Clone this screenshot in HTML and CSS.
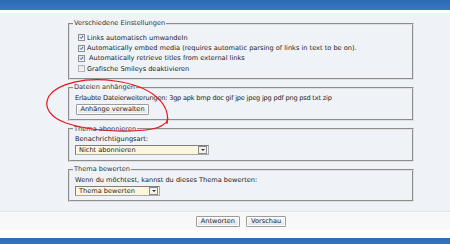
FILE: index.html
```html
<!DOCTYPE html>
<html>
<head>
  <meta charset="utf-8">
  <title>Antworten</title>
  <link rel="stylesheet" href="styles.css">
</head>
<body>
  <div class="topbar"></div>

  <div class="panel">
    <div class="column">
      <fieldset class="box box-options">
        <legend>Verschiedene Einstellungen</legend>
        <label class="check"><span class="cb"><svg viewBox="0 0 7 7"><path d="M1.6 3.4 L3 5 L5.6 1.4"/></svg></span>Links automatisch umwandeln</label>
        <label class="check"><span class="cb"><svg viewBox="0 0 7 7"><path d="M1.6 3.4 L3 5 L5.6 1.4"/></svg></span>Automatically embed media (requires automatic parsing of links in text to be on).</label>
        <label class="check"><span class="cb"><svg viewBox="0 0 7 7"><path d="M1.6 3.4 L3 5 L5.6 1.4"/></svg></span>&nbsp;Automatically retrieve titles from external links</label>
        <label class="check"><span class="cb off"></span>Grafische Smileys deaktivieren</label>
      </fieldset>

      <fieldset class="box">
        <legend>Dateien anhängen</legend>
        <div class="line line-tight">Erlaubte Dateierweiterungen: 3gp apk bmp doc gif jpe jpeg jpg pdf png psd txt zip</div>
        <button class="btn btn-attach" type="button">Anhänge verwalten</button>
      </fieldset>

      <fieldset class="box">
        <legend>Thema abonnieren</legend>
        <div class="line">Benachrichtigungsart:</div>
        <div class="select select-wide"><span class="select-text">Nicht abonnieren</span><span class="select-arrow"></span></div>
      </fieldset>

      <fieldset class="box">
        <legend>Thema bewerten</legend>
        <div class="line">Wenn du möchtest, kannst du dieses Thema bewerten:</div>
        <div class="select select-short"><span class="select-text">Thema bewerten</span><span class="select-arrow"></span></div>
      </fieldset>
    </div>
  </div>

  <div class="footer">
    <div class="column buttons">
      <button class="btn" type="button">Antworten</button>
      <button class="btn" type="button">Vorschau</button>
    </div>
  </div>

  <div class="bottombar"></div>

  <!-- red marker circle drawn over the attachments box -->
  <svg class="scribble" width="450" height="244" viewBox="0 0 450 244">
    <path d="M167 124 C171 104 152 86 115 81 C86 77 58 83 49 96 C42 108 52 118 66 123 C88 131 128 133 152 129 C162 127 167 124 168 118"/>
  </svg>
</body>
</html>
```

FILE: styles.css
```css
body {
  margin: 0;
  background: #ffffff;
  font-family: "DejaVu Sans", sans-serif;
  font-size: 6.6px;
  color: #222222;
  position: relative;
  height: 244px;
  overflow: hidden;
}

.topbar {
  height: 10px;
  background: linear-gradient(#2c69b2, #3877c2);
}

.panel {
  margin-top: 3px;
  background: #eff3f7;
  padding: 6px 0 9px 0;
}

.column {
  margin-left: 68px;
  width: 346px;
}

.box {
  margin: 0 0 3.5px 0;
  padding: 0 4px 4.5px 4px;
  border: 2px groove #e0e0e0;
}
.box:last-child {
  margin-bottom: 0;
}

.box legend {
  padding: 0 1px;
  margin-left: -1px;
  line-height: 9px;
  color: #333333;
}

.box-options {
  padding-top: 4.5px;
  padding-bottom: 3.5px;
}

.check {
  display: flex;
  align-items: center;
  height: 10.4px;
  padding-left: 4px;
  gap: 2px;
}

.cb {
  width: 5px;
  height: 5px;
  border: 1px solid #8e8f8f;
  background: linear-gradient(#dedede, #fbfbfb);
  display: flex;
}
.cb svg {
  width: 5px;
  height: 5px;
  fill: none;
  stroke: #2446a8;
  stroke-width: 1.3;
}
.cb.off {
  border-color: #b4b4b4;
  background: linear-gradient(#e8e8e8, #f6f6f6);
}

.line {
  line-height: 10px;
  padding-top: 0.5px;
  padding-left: 1px;
}
.line-tight {
  letter-spacing: -0.2px;
}

.btn {
  font-family: inherit;
  font-size: 6.6px;
  color: #222222;
  height: 11px;
  line-height: 9px;
  padding: 0 4px;
  border: 1px solid #9c9c9c;
  border-radius: 1px;
  background: linear-gradient(#fbfbfb, #e3e3e3);
  box-shadow: inset 0 0 0 1px #ffffff;
}

.btn-attach {
  display: block;
  margin: 1px 0 0 2px;
  width: 73px;
  padding: 0;
}

.select {
  margin: 1px 0 0 1px;
  height: 10px;
  box-sizing: border-box;
  border: 1px solid #a9a9a9;
  border-top-color: #7f7f7f;
  border-left-color: #7f7f7f;
  background: #fdf6df;
  display: flex;
  align-items: center;
  justify-content: space-between;
}
.select-wide {
  width: 134px;
}
.select-short {
  width: 85px;
}
.select-text {
  padding-left: 3px;
  line-height: 8px;
}
.select-arrow {
  width: 7px;
  height: 6px;
  margin-right: 1px;
  border: 1px solid #8a8a8a;
  background: #f1f1f1;
  position: relative;
}
.select-arrow::after {
  content: "";
  position: absolute;
  left: 1.5px;
  top: 2px;
  border-left: 2px solid transparent;
  border-right: 2px solid transparent;
  border-top: 2px solid #333333;
}

.footer {
  border-top: 1px solid #e2e6ea;
  background: #f8f8f8;
  height: 18px;
  display: flex;
  align-items: center;
}

.buttons {
  display: flex;
  justify-content: center;
  gap: 6px;
}

.bottombar {
  margin-top: 8px;
  height: 10px;
  background: linear-gradient(#2f6db8, #3776c1);
}

.scribble {
  position: absolute;
  left: 0;
  top: 0;
  pointer-events: none;
}
.scribble path {
  fill: none;
  stroke: #e8141c;
  stroke-width: 1.2;
}
```
